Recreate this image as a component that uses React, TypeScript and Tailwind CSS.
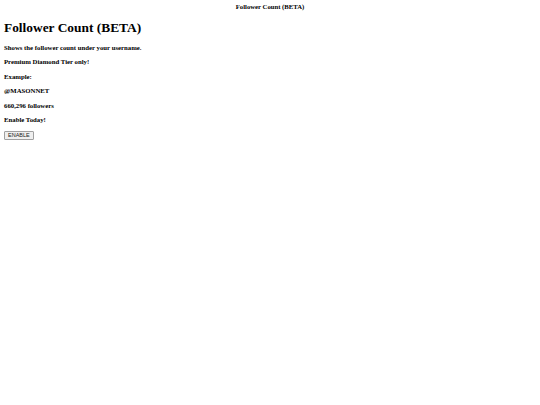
export default function App() {
  const lines = [
    "Shows the follower count under your username.",
    "Premium Diamond Tier only!",
    "Example:",
    "@MASONNET",
    "660,296 followers",
    "Enable Today!",
  ]

  return (
    <div className="min-h-[405px] bg-white text-black font-['Liberation_Serif',serif]">
      <div className="pt-[3px] text-center text-[6.7px] font-bold leading-[8px]">Follower Count (BETA)</div>
      <div className="px-[4px]">
        <h1 className="mt-[9px] text-[13.4px] font-bold leading-[16px]">Follower Count (BETA)</h1>
        <div className="mt-[8px] flex flex-col gap-[6.4px]">
          {lines.map((line) => (
            <div key={line} className="text-[6.75px] font-bold leading-[8px]">
              {line}
            </div>
          ))}
        </div>
        <div className="mt-[7px] flex">
          <button className="flex h-[9px] items-center rounded-[1px] border border-[#a0a0a0] bg-[#efefef] px-[3px] text-[5.5px] leading-[6px] text-[#222] font-['Liberation_Sans',sans-serif]">
            ENABLE
          </button>
        </div>
      </div>
    </div>
  )
}
